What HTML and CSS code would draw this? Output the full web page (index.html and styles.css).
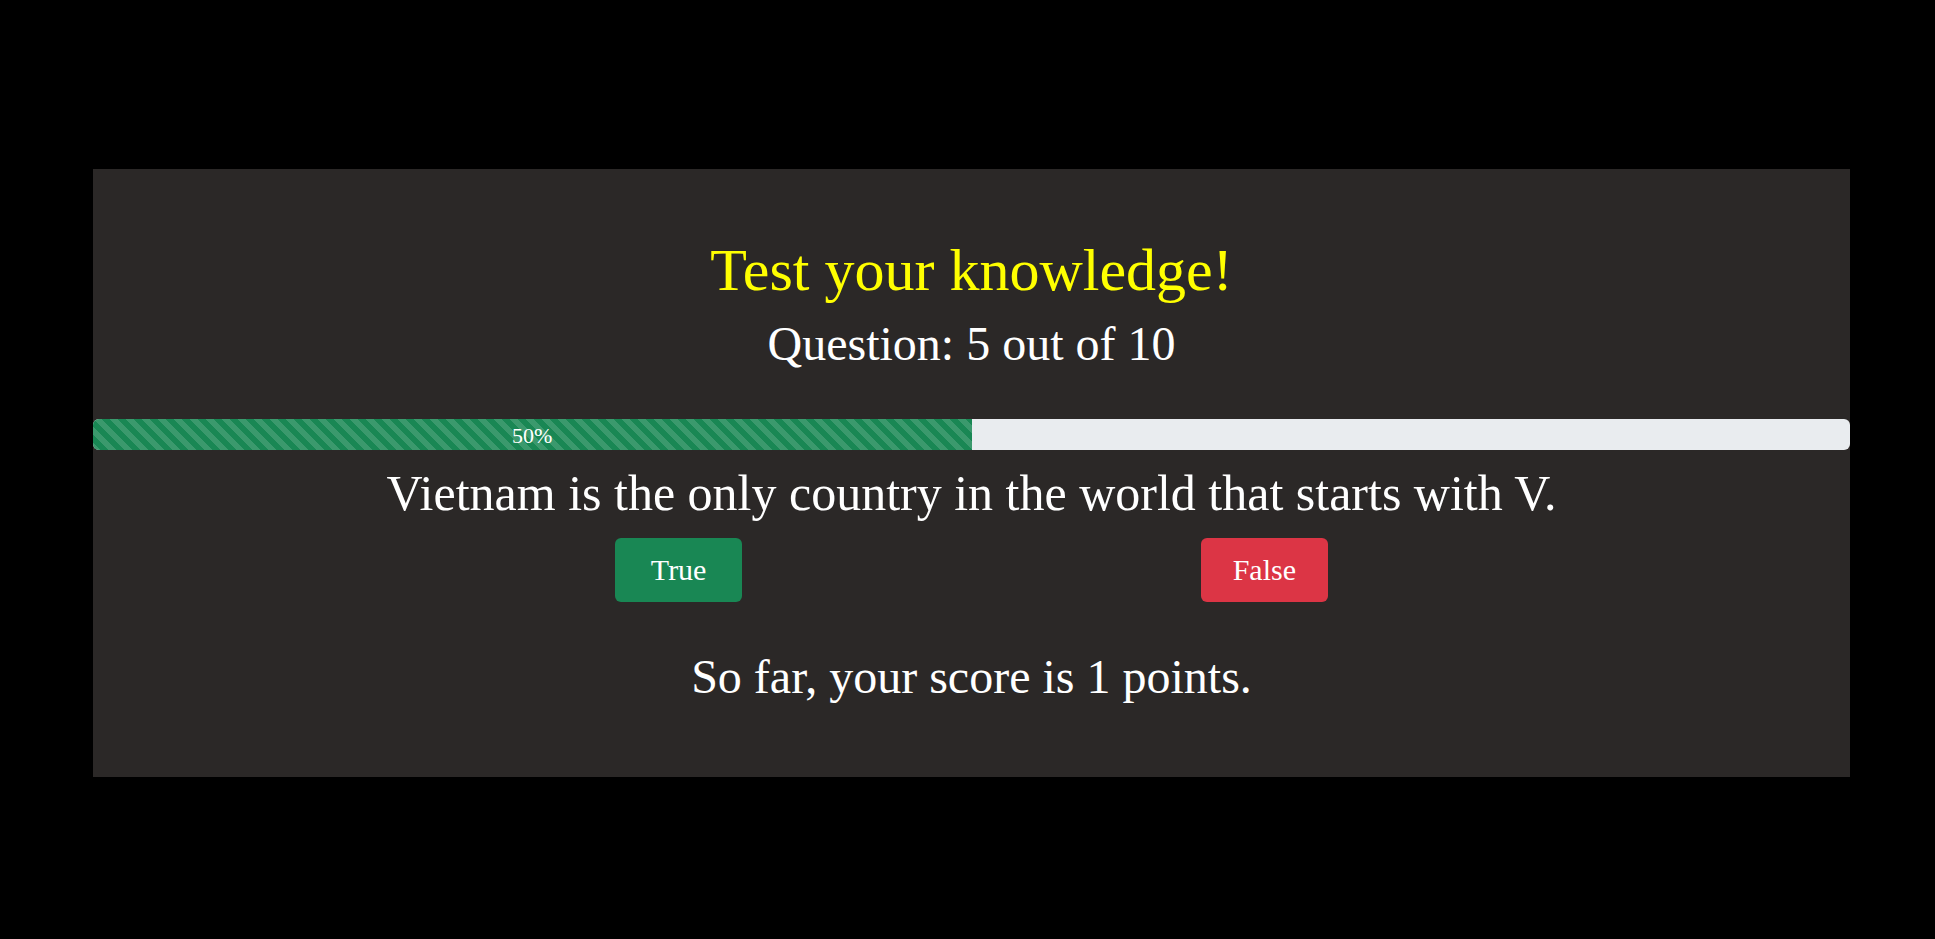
FILE: index.html
```html
<!DOCTYPE html>
<html lang="en">
<head>
<meta charset="utf-8">
<title>Quiz</title>
<link rel="stylesheet" href="styles.css">
</head>
<body>
<div class="page">
  <main class="panel">
    <h1 class="title">Test your knowledge!</h1>
    <h2 class="counter">Question: 5 out of 10</h2>
    <div class="progress">
      <div class="progress-bar" style="width: 50%">50%</div>
    </div>
    <p class="statement">Vietnam is the only country in the world that starts with V.</p>
    <div class="answers">
      <div class="answer-col"><button class="btn btn-true">True</button></div>
      <div class="answer-col"><button class="btn btn-false">False</button></div>
    </div>
    <p class="score">So far, your score is 1 points.</p>
  </main>
</div>
</body>
</html>
```

FILE: styles.css
```css
html, body {
  margin: 0;
  padding: 0;
  background: #000;
}

body {
  font-family: "Liberation Serif", "Times New Roman", serif;
  color: #fff;
}

.page {
  padding: 169px 85px 0 93px;
}

.panel {
  background: #2b2827;
  padding: 71px 0 76px;
  text-align: center;
}

.title {
  margin: 0;
  font-size: 60px;
  font-weight: 400;
  line-height: 1;
  color: #ffff00;
}

.counter {
  margin: 20px 0 0;
  font-size: 48px;
  font-weight: 400;
  line-height: 1;
}

.progress {
  margin-top: 51px;
  height: 31px;
  background: #e9ecef;
  border-radius: 6px;
  overflow: hidden;
  display: flex;
}

.progress-bar {
  background-color: #198754;
  background-image: linear-gradient(45deg, rgba(255,255,255,.15) 25%, transparent 25%, transparent 50%, rgba(255,255,255,.15) 50%, rgba(255,255,255,.15) 75%, transparent 75%, transparent);
  background-size: 16px 16px;
  color: #fff;
  font-size: 22px;
  line-height: 33px;
  text-align: center;
  white-space: nowrap;
}

.statement {
  margin: 18px 0 0;
  font-size: 50px;
  line-height: 1;
}

.answers {
  margin-top: 20px;
  display: grid;
  grid-template-columns: 1fr 2fr 2fr 1fr;
}

.answer-col {
  display: flex;
  justify-content: center;
}

.answer-col:first-child {
  grid-column: 2;
}

.btn {
  height: 64px;
  width: 127px;
  border: 0;
  border-radius: 6px;
  color: #fff;
  font-family: "Liberation Serif", "Times New Roman", serif;
  font-size: 30px;
  padding: 0;
  cursor: pointer;
}

.btn-true {
  background: #198754;
}

.btn-false {
  background: #dc3545;
}

.score {
  margin: 51px 0 0;
  font-size: 48px;
  line-height: 1;
}
```
